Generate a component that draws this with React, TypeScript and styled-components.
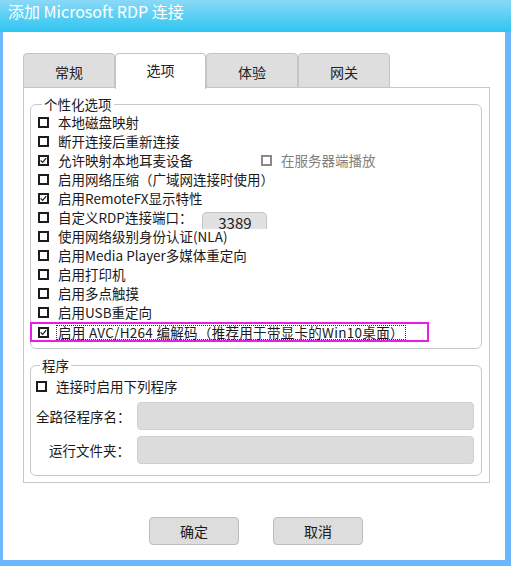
import React from "react";
import styled, { createGlobalStyle } from "styled-components";

const Global = createGlobalStyle`
  html, body { margin: 0; padding: 0; }
  body { width: 511px; height: 566px; overflow: hidden; background: #6cb6fb; }
  * { box-sizing: border-box; }
`;

const FONT = `"Noto Sans CJK SC", "Noto Sans", sans-serif`;

const Window = styled.div`
  width: 511px;
  height: 566px;
  display: flex;
  flex-direction: column;
  background: #6cb6fb;
  font-family: ${FONT};
  color: #1a1a1a;
`;

const TitleBar = styled.div`
  height: 32px;
  flex: none;
  background: linear-gradient(#8ad9f6, #2ec5f1);
  color: #fff;
  font-size: 16px;
  line-height: 22px;
  padding: 0 0 0 8px;
`;

const Client = styled.div`
  flex: 1;
  margin: 0 6px 6px 3px;
  background: #fff;
  display: flex;
  flex-direction: column;
  padding: 22px 16px 0 20px;
`;

const TabStrip = styled.div`
  display: flex;
  height: 34px;
  align-items: flex-end;
  position: relative;
  z-index: 1;
`;

const Tab = styled.div<{ $active?: boolean }>`
  width: ${(p) => (p.$active ? 91 : 92)}px;
  height: ${(p) => (p.$active ? 36 : 35)}px;
  margin-bottom: ${(p) => (p.$active ? -1 : 0)}px;
  border: 1px solid #c4c4c4;
  border-bottom: ${(p) => (p.$active ? "none" : "1px solid #c4c4c4")};
  border-radius: 4px 4px 0 0;
  background: ${(p) => (p.$active ? "#fff" : "#dedede")};
  font-size: 14px;
  display: flex;
  justify-content: center;
  padding-top: ${(p) => (p.$active ? 6 : 8)}px;
  line-height: 20px;
  color: #222;
`;

const Panel = styled.div`
  width: 467px;
  height: 396px;
  border: 1px solid #c8c8c8;
  margin-top: -1px;
  padding: 7px 7px 0 6px;
  display: flex;
  flex-direction: column;
`;

const Group = styled.fieldset`
  margin: 0;
  border: 1px solid #c8c8c8;
  border-radius: 6px;
  padding: 0 6px 6px 7px;
  min-width: 0;
`;

const Legend = styled.legend`
  font-size: 13.5px;
  line-height: 18px;
  padding: 0 2px;
  margin-left: 4px;
  color: #1a1a1a;
`;

const Row = styled.div<{ $gap?: number }>`
  height: 19px;
  margin-top: ${(p) => p.$gap ?? 0}px;
  display: flex;
  align-items: center;
  font-size: 13.5px;
  line-height: 19px;
  white-space: nowrap;
`;

const Check = styled.span<{ $gray?: boolean }>`
  width: 11px;
  height: 11px;
  flex: none;
  border: 2px solid ${(p) => (p.$gray ? "#8a8a8a" : "#1c1c1c")};
  background: #fff;
  margin-right: 9px;
  display: flex;
  align-items: center;
  justify-content: center;
`;

const Label = styled.span<{ $gray?: boolean }>`
  color: ${(p) => (p.$gray ? "#7f7f7f" : "#1a1a1a")};
`;

const Side = styled.div`
  display: flex;
  align-items: center;
  margin-left: auto;
  width: 214px;
`;

const PortBox = styled.div`
  width: 65px;
  height: 17px;
  margin-left: 10px;
  margin-bottom: -2px;
  align-self: flex-end;
  border: 1px solid #c4c4c4;
  border-bottom: none;
  border-radius: 5px 5px 0 0;
  background: #e1e1e1;
  font-size: 15px;
  line-height: 13px;
  padding-top: 3px;
  text-align: center;
  color: #222;
`;

const Highlight = styled.div`
  margin: 0 0 0 -8px;
  width: 399px;
  height: 20px;
  border: 2.5px solid #e81ee8;
  display: flex;
  align-items: center;
  padding-left: 6px;
  font-size: 13.5px;
  white-space: nowrap;
`;

const Focus = styled.span`
  border: 1px dotted #333;
  line-height: 13px;
  height: 15px;
  padding: 0 1px;
  margin-left: -2px;
  letter-spacing: 0.3px;
`;

const Group2 = styled(Group)`
  margin-top: 7px;
  padding: 0 7px 11px 5px;
`;

const FieldGrid = styled.div`
  display: grid;
  grid-template-columns: 94px 1fr;
  column-gap: 7px;
  row-gap: 6px;
  margin-top: 6px;
`;

const FieldLabel = styled.span`
  font-size: 13.5px;
  text-align: right;
  align-self: center;
  white-space: nowrap;
`;

const Input = styled.div`
  height: 28px;
  border: 1px solid #cfcfcf;
  border-radius: 4px;
  background: #dcdcdc;
`;

const Buttons = styled.div`
  display: flex;
  justify-content: center;
  gap: 34px;
  margin-top: 34px;
`;

const Button = styled.div`
  width: 90px;
  height: 28px;
  border: 1px solid #bdbdbd;
  border-radius: 4px;
  background: #dddddd;
  font-size: 14px;
  display: flex;
  align-items: center;
  justify-content: center;
  color: #1a1a1a;
`;

const Tick = () => (
  <svg width="9" height="9" viewBox="0 0 9 9">
    <path d="M0.8 4.4 L3.4 7 L8 1.4" fill="none" stroke="#1c1c1c" strokeWidth="1.6" />
  </svg>
);

const CheckBox = ({ checked, gray }: { checked?: boolean; gray?: boolean }) => (
  <Check $gray={gray}>{checked ? <Tick /> : null}</Check>
);

const options: { text: string; checked?: boolean }[] = [
  { text: "本地磁盘映射" },
  { text: "断开连接后重新连接" },
  { text: "允许映射本地耳麦设备", checked: true },
  { text: "启用网络压缩（广域网连接时使用）" },
  { text: "启用RemoteFX显示特性", checked: true },
  { text: "自定义RDP连接端口：" },
  { text: "使用网络级别身份认证(NLA)" },
  { text: "启用Media Player多媒体重定向" },
  { text: "启用打印机" },
  { text: "启用多点触摸" },
  { text: "启用USB重定向" },
];

export default function App() {
  return (
    <>
      <Global />
      <Window>
        <TitleBar>添加 Microsoft RDP 连接</TitleBar>
        <Client>
          <TabStrip>
            <Tab>常规</Tab>
            <Tab $active>选项</Tab>
            <Tab>体验</Tab>
            <Tab>网关</Tab>
          </TabStrip>
          <Panel>
            <Group>
              <Legend>个性化选项</Legend>
              {options.map((o, i) => (
                <Row key={i}>
                  <CheckBox checked={o.checked} />
                  <Label>{o.text}</Label>
                  {i === 2 && (
                    <Side>
                      <CheckBox gray />
                      <Label $gray>在服务器端播放</Label>
                    </Side>
                  )}
                  {i === 5 && <PortBox>3389</PortBox>}
                </Row>
              ))}
              <Highlight>
                <CheckBox checked />
                <Focus>启用 AVC/H264 编解码（推荐用于带显卡的Win10桌面）</Focus>
              </Highlight>
            </Group>
            <Group2>
              <Legend>程序</Legend>
              <Row $gap={3}>
                <CheckBox />
                <Label>连接时启用下列程序</Label>
              </Row>
              <FieldGrid>
                <FieldLabel>全路径程序名：</FieldLabel>
                <Input />
                <FieldLabel>运行文件夹：</FieldLabel>
                <Input />
              </FieldGrid>
            </Group2>
          </Panel>
          <Buttons>
            <Button>确定</Button>
            <Button>取消</Button>
          </Buttons>
        </Client>
      </Window>
    </>
  );
}
